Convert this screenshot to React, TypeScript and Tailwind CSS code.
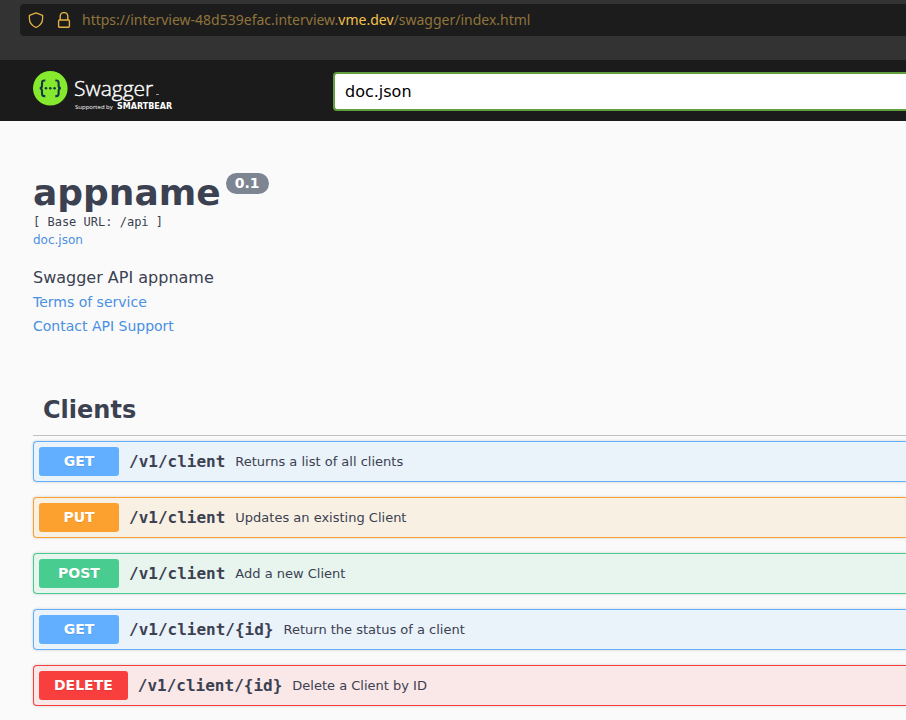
type Method = 'GET' | 'PUT' | 'POST' | 'DELETE';

type Operation = {
  method: Method;
  path: string;
  summary: string;
};

const operations: Operation[] = [
  { method: 'GET', path: '/v1/client', summary: 'Returns a list of all clients' },
  { method: 'PUT', path: '/v1/client', summary: 'Updates an existing Client' },
  { method: 'POST', path: '/v1/client', summary: 'Add a new Client' },
  { method: 'GET', path: '/v1/client/{id}', summary: 'Return the status of a client' },
  { method: 'DELETE', path: '/v1/client/{id}', summary: 'Delete a Client by ID' },
];

const rowStyles: Record<Method, string> = {
  GET: 'border-[#61affe] bg-[#eaf2fa]',
  PUT: 'border-[#fca130] bg-[#f9f0e4]',
  POST: 'border-[#49cc90] bg-[#e8f5ee]',
  DELETE: 'border-[#f93e3e] bg-[#fae7e7]',
};

const badgeStyles: Record<Method, string> = {
  GET: 'bg-[#61affe]',
  PUT: 'bg-[#fca130]',
  POST: 'bg-[#49cc90]',
  DELETE: 'bg-[#f93e3e]',
};

function AddressBar() {
  return (
    <div className="h-[60px] bg-[#333333] pt-1 pl-5">
      <div className="flex h-8 items-center rounded-l bg-[#1c1c1c] pl-2 font-['Noto_Sans',sans-serif] text-sm text-[#8f743c]">
        <svg className="mr-3 size-4 shrink-0" viewBox="0 0 16 16" fill="none" stroke="#e2b144" strokeWidth="1.3" strokeLinejoin="round" aria-hidden="true">
          <path d="M8 .8 14.6 3.3v3.2c0 3.8-2.4 7.2-6.6 9C3.8 13.700 1.400 10.300 1.400 6.500V3.300Z" />
        </svg>
        <svg className="mr-[10px] size-4 shrink-0" viewBox="0 0 16 16" fill="none" stroke="#e2b144" strokeWidth="1.4" aria-hidden="true">
          <path d="M4.200 8V4.300a3.800 3.800 0 0 1 7.600 0V8" />
          <rect x="2.600" y="8" width="10.800" height="7.200" rx="1" />
        </svg>
        <span className="whitespace-nowrap">
          https://interview-48d539efac.interview.<span className="text-[#f5c04a]">vme.dev</span>/swagger/index.html
        </span>
      </div>
    </div>
  );
}

function Logo() {
  return (
    <a href="#top" aria-label="Swagger" className="w-[300px] shrink-0">
      <svg width="144" height="42" viewBox="0 0 144 42" aria-hidden="true">
        <circle cx="17.300" cy="17.300" r="17.300" fill="#85ea2d" />
        <g fill="none" stroke="#173647" strokeWidth="2.100">
          <path d="M12.300 9.500h-1c-1.600 0-2.300.8-2.300 2.300v2.700c0 1.800-.7 2.800-2.300 2.800 1.600 0 2.300 1 2.300 2.800v2.700c0 1.600.7 2.300 2.300 2.300h1" />
          <path d="M22.300 9.500h1c1.600 0 2.300.8 2.300 2.300v2.700c0 1.800.7 2.800 2.300 2.800-1.600 0-2.300 1-2.300 2.800v2.700c0 1.600-.7 2.300-2.300 2.300h-1" />
        </g>
        <g fill="#173647">
          <circle cx="13" cy="17.300" r="1.300" />
          <circle cx="17.300" cy="17.300" r="1.300" />
          <circle cx="21.600" cy="17.300" r="1.300" />
        </g>
        <text x="41" y="25" fill="#fff" stroke="#fff" strokeWidth=".4" className="font-['Open_Sans',sans-serif] text-[21px] font-light">Swagger</text>
        <path d="M123 23.500h3" stroke="#999" />
        <text x="42" y="38" fill="#fff" className="font-['Open_Sans',sans-serif] text-[6px]">Supported by</text>
        <text x="84" y="38" fill="#fff" className="font-['DejaVu_Sans',sans-serif] text-[8px] font-bold">SMARTBEAR</text>
      </svg>
    </a>
  );
}

function OperationRow({ method, path, summary }: Operation) {
  return (
    <li className={`rounded-l border border-r-0 shadow-[0_0_3px_rgba(0,0,0,0.19)] ${rowStyles[method]}`}>
      <button type="button" className="flex w-full items-center p-[5px] text-left whitespace-nowrap">
        <span
          className={`h-[29px] min-w-20 rounded-[3px] px-[15px] text-center text-sm leading-[29px] font-bold text-white [text-shadow:0_1px_0_rgba(0,0,0,0.1)] ${badgeStyles[method]}`}
        >
          {method}
        </span>
        <span className="px-[10px] font-['DejaVu_Sans_Mono',monospace] text-base leading-5 font-bold">{path}</span>
        <span className="text-[13px] leading-5">{summary}</span>
      </button>
    </li>
  );
}

export default function App() {
  return (
    <div id="top" className="min-h-screen bg-[#fafafa] font-['DejaVu_Sans',sans-serif] text-[#3b4151]">
      <AddressBar />
      <header className="flex h-[61px] items-start bg-[#1b1b1b] pt-[11px] pl-[33px]">
        <Logo />
        <input
          type="text"
          aria-label="Specification URL"
          defaultValue="doc.json"
          className="mt-px h-[39px] min-w-0 flex-1 rounded-l border-2 border-r-0 border-[#62a03f] bg-white px-[10px] text-base text-black outline-none"
        />
      </header>
      <main className="pl-[33px]">
        <section className="pt-[50px]">
          <div className="flex items-start gap-[5px]">
            <h1 className="text-4xl leading-[44px] font-bold">appname</h1>
            <span className="mt-[2px] h-[21px] rounded-full bg-[#7d8492] px-[9px] text-sm leading-[21px] font-bold text-white">0.1</span>
          </div>
          <p className="-mt-[2px] font-['DejaVu_Sans_Mono',monospace] text-xs leading-[18px]">[ Base URL: /api ]</p>
          <a href="#doc" className="block w-fit text-xs leading-[18px] text-[#4990e2]">doc.json</a>
          <p className="mt-[17px] text-base leading-6">Swagger API appname</p>
          <a href="#terms" className="block w-fit text-sm leading-6 text-[#4990e2]">Terms of service</a>
          <a href="#contact" className="block w-fit text-sm leading-6 text-[#4990e2]">Contact API Support</a>
        </section>
        <section className="mt-[45px]">
          <h2 className="border-b border-[#bfc0c3] px-[10px] pt-[10px] pb-2 text-2xl leading-[34px] font-bold">Clients</h2>
          <ul className="mt-[5px] flex flex-col gap-[15px]">
            {operations.map((op) => (
              <OperationRow key={`${op.method} ${op.path}`} {...op} />
            ))}
          </ul>
        </section>
      </main>
    </div>
  );
}
